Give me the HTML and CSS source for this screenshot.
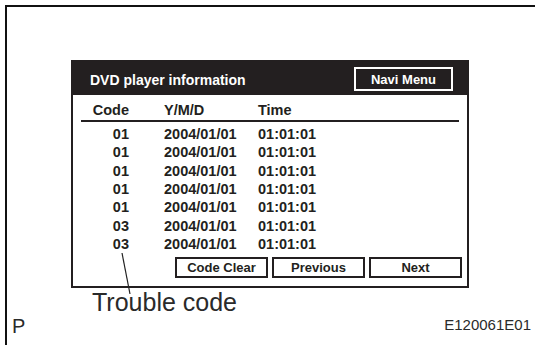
FILE: index.html
```html
<!DOCTYPE html>
<html lang="en">
<head>
  <meta charset="UTF-8" />
  <title>DVD player information</title>
  <link rel="stylesheet" href="styles.css">
</head>
<body>
  <div class="frame">
    <div class="figure">
      <div class="panel">
        <div class="panel-head">
          <span class="title">DVD player information</span>
          <button class="navi">Navi Menu</button>
        </div>

        <div class="table">
          <div class="row head">
            <span class="code">Code</span>
            <span class="date">Y/M/D</span>
            <span class="time">Time</span>
          </div>
          <div class="row"><span class="code">01</span><span class="date">2004/01/01</span><span class="time">01:01:01</span></div>
          <div class="row"><span class="code">01</span><span class="date">2004/01/01</span><span class="time">01:01:01</span></div>
          <div class="row"><span class="code">01</span><span class="date">2004/01/01</span><span class="time">01:01:01</span></div>
          <div class="row"><span class="code">01</span><span class="date">2004/01/01</span><span class="time">01:01:01</span></div>
          <div class="row"><span class="code">01</span><span class="date">2004/01/01</span><span class="time">01:01:01</span></div>
          <div class="row"><span class="code">03</span><span class="date">2004/01/01</span><span class="time">01:01:01</span></div>
          <div class="row"><span class="code">03</span><span class="date">2004/01/01</span><span class="time">01:01:01</span></div>
        </div>

        <div class="buttons">
          <button class="btn">Code Clear</button>
          <button class="btn">Previous</button>
          <button class="btn">Next</button>
        </div>
      </div>

      <!-- leader from the last code to its label -->
      <svg class="leader" width="20" height="50" viewBox="0 0 20 50">
        <line x1="2" y1="0" x2="10" y2="41" stroke="#222" stroke-width="1.2" />
      </svg>

      <div class="callout">Trouble code</div>
    </div>

    <div class="footer">
      <span class="mark">P</span>
      <span class="ref">E120061E01</span>
    </div>
  </div>
</body>
</html>
```

FILE: styles.css
```css
body {
  margin: 0;
  background: #fff;
  color: #231f20;
  font-family: "Liberation Sans", Arial, sans-serif;
}

.frame {
  margin: 5px 0 0 5px;
  height: 340px;
  box-sizing: border-box;
  border-top: 2px solid #111;
  border-left: 2px solid #111;
  padding-top: 53px;
}

.figure {
  position: relative;
  margin-left: 64px;
  width: 398px;
}

.panel {
  border: 2px solid #231f20;
  box-sizing: border-box;
  width: 398px;
  padding-bottom: 8px;
}

.panel-head {
  height: 33px;
  background: #231f20;
  display: flex;
  align-items: center;
  justify-content: space-between;
  padding: 0 14px 0 17px;
}

.title {
  color: #fff;
  font-weight: bold;
  font-size: 14px;
  padding-top: 2px;
}

.navi {
  width: 99px;
  height: 24px;
  margin-top: 1px;
  background: #231f20;
  border: 2px solid #fff;
  color: #fff;
  font-family: inherit;
  font-weight: bold;
  font-size: 13px;
  padding: 0;
}

.table {
  margin: 6px 8px 0;
  font-weight: bold;
  font-size: 14.5px;
}

.row {
  display: grid;
  grid-template-columns: 48px 129px 1fr;
  line-height: 18.33px;
}

.row.head {
  line-height: 18px;
  padding-bottom: 1px;
  border-bottom: 2px solid #231f20;
  margin-bottom: 3px;
}

.code {
  text-align: right;
}

.date {
  padding-left: 35px;
}

.buttons {
  display: flex;
  justify-content: flex-end;
  gap: 4px;
  margin: 4px 5px 0 0;
}

.btn {
  width: 93px;
  height: 21px;
  background: #fff;
  border: 2px solid #231f20;
  color: #231f20;
  font-family: inherit;
  font-weight: bold;
  font-size: 13px;
  padding: 0;
}

.leader {
  position: absolute;
  left: 49px;
  top: 193px;
}

.callout {
  padding-left: 21px;
  font-size: 25px;
  line-height: 28px;
  color: #2a2a2a;
}

.footer {
  display: flex;
  justify-content: space-between;
  align-items: flex-start;
  padding: 0 4px 0 5px;
  color: #2a2a2a;
}

.mark {
  font-size: 20px;
  line-height: 20px;
}

.ref {
  font-size: 15px;
  line-height: 17px;
}
```
